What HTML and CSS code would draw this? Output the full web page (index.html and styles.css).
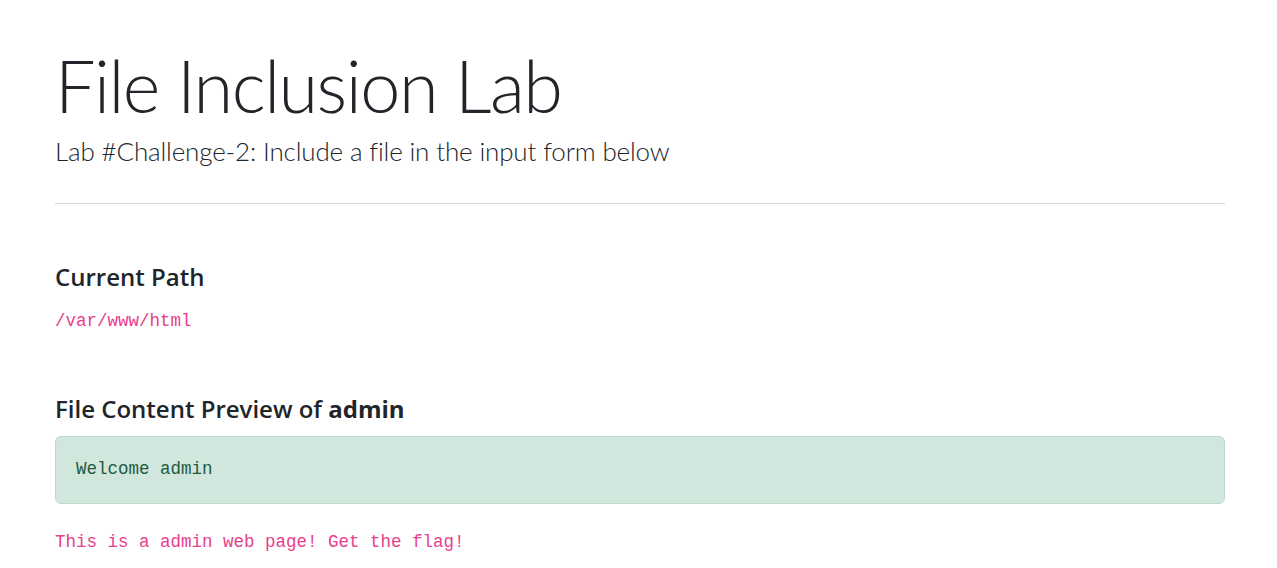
FILE: index.html
```html
<!DOCTYPE html>
<html lang="en">
<head>
<meta charset="utf-8">
<title>File Inclusion Lab</title>
<link rel="stylesheet" href="styles.css">
</head>
<body>
<div class="container">
  <header class="header">
    <h1 class="title">File Inclusion Lab</h1>
    <p class="lead">Lab #Challenge-2: Include a file in the input form below</p>
  </header>
  <hr class="divider">
  <section class="section">
    <h4 class="heading">Current Path</h4>
    <code class="code">/var/www/html</code>
  </section>
  <section class="section section-preview">
    <h4 class="heading">File Content Preview of <b>admin</b></h4>
    <div class="alert">
      <pre class="alert-code">Welcome admin</pre>
    </div>
    <code class="code">This is a admin web page! Get the flag!</code>
  </section>
</div>
</body>
</html>
```
FILE: styles.css
```css
html, body {
  margin: 0;
  padding: 0;
  background: #ffffff;
}
body {
  font-family: "Lato", "Open Sans", sans-serif;
  color: #212529;
  font-size: 20px;
}
.container {
  padding: 0 52px 0 55px;
}
.header {
  padding-top: 42px;
}
.title {
  font-family: "Lato", sans-serif;
  font-size: 72px;
  font-weight: 300;
  letter-spacing: -1.5px;
  line-height: 1.2;
  margin: 0;
}
.lead {
  font-family: "Lato", sans-serif;
  font-size: 26px;
  font-weight: 300;
  letter-spacing: -0.15px;
  line-height: 1.2;
  margin: 8px 0 0 0;
}
.divider {
  margin: 35px 0 0 0;
  border: 0;
  border-top: 1px solid #d9d9d9;
}
.section {
  display: flex;
  flex-direction: column;
  align-items: flex-start;
}
.heading {
  font-family: "Open Sans", sans-serif;
  font-size: 24px;
  font-weight: 600;
  line-height: 1.2;
  margin: 59px 0 0 0;
}
.heading b {
  font-weight: 700;
}
.code {
  font-family: "Liberation Mono", monospace;
  font-size: 17.5px;
  line-height: 20px;
  color: #e83e8c;
  margin-top: 20px;
}
.section-preview .heading {
  margin-top: 64px;
}
.alert {
  align-self: stretch;
  margin-top: 12px;
  background: #d1e7dd;
  border: 1px solid #badbcc;
  border-radius: 6px;
  padding: 22px 20px 24px 20px;
  margin-bottom: 28px;
}
.alert-code {
  margin: 0;
  font-family: "Liberation Mono", monospace;
  font-size: 17.5px;
  line-height: 20px;
  color: #1d5a40;
}
.section-preview .code {
  margin-top: 0;
}
```
